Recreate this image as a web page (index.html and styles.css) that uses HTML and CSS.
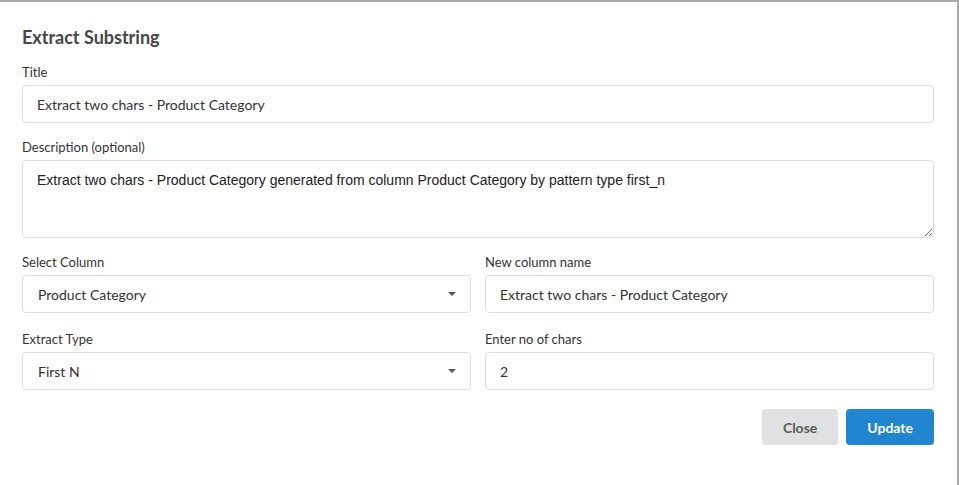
FILE: index.html
```html
<!DOCTYPE html>
<html>
<head>
<meta charset="utf-8">
<link rel="stylesheet" href="styles.css">
</head>
<body>
<div class="modal">
  <h1 class="header">Extract Substring</h1>
  <div class="field">
    <label class="label">Title</label>
    <input class="input" type="text" value="Extract two chars - Product Category">
  </div>
  <div class="field">
    <label class="label">Description (optional)</label>
    <textarea class="textarea">Extract two chars - Product Category generated from column Product Category by pattern type first_n</textarea>
  </div>
  <div class="row row-first">
    <div class="col">
      <label class="label">Select Column</label>
      <div class="select"><span>Product Category</span><i class="caret"></i></div>
    </div>
    <div class="col">
      <label class="label">New column name</label>
      <input class="input" type="text" value="Extract two chars - Product Category">
    </div>
  </div>
  <div class="row">
    <div class="col">
      <label class="label">Extract Type</label>
      <div class="select"><span>First N</span><i class="caret"></i></div>
    </div>
    <div class="col">
      <label class="label">Enter no of chars</label>
      <input class="input" type="text" value="2">
    </div>
  </div>
  <div class="actions">
    <button class="btn btn-close">Close</button>
    <button class="btn btn-update">Update</button>
  </div>
</div>
</body>
</html>
```
FILE: styles.css
```css
html, body {
  margin: 0;
  padding: 0;
  height: 100%;
  background: #a9a9a9;
}
body {
  font-family: Lato, "Noto Sans", sans-serif;
  overflow: hidden;
}
.modal {
  box-sizing: border-box;
  margin-top: 2px;
  width: 957px;
  height: 483px;
  background: #fff;
  padding: 24px 23px 0 22px;
}
.header {
  margin: 0 0 15px 0;
  font-size: 18px;
  line-height: 22px;
  font-weight: 700;
  color: #474747;
}
.field {
  margin-bottom: 15px;
}
.label {
  display: block;
  font-size: 13px;
  line-height: 18px;
  color: #333;
  margin-bottom: 4px;
}
.input {
  box-sizing: border-box;
  display: block;
  width: 100%;
  height: 38px;
  margin: 0;
  padding: 0 14px;
  border: 1px solid #dedede;
  border-radius: 4px;
  font-family: Lato, "Noto Sans", sans-serif;
  font-size: 14px;
  color: #333;
  background: #fff;
  outline: none;
}
.textarea {
  box-sizing: border-box;
  display: block;
  width: 100%;
  height: 78px;
  margin: 0;
  padding: 11px 14px;
  border: 1px solid #dedede;
  border-radius: 4px;
  font-family: "Liberation Sans", Arial, sans-serif;
  font-size: 14px;
  line-height: 17px;
  color: #222;
  resize: vertical;
  outline: none;
}
.row {
  display: flex;
  gap: 14px;
  margin-bottom: 19px;
}
.row-first {
  margin-bottom: 17px;
}
.col {
  flex: 1;
  min-width: 0;
}
.select {
  box-sizing: border-box;
  height: 38px;
  border: 1px solid #dedede;
  border-radius: 4px;
  padding: 0 14px 0 15px;
  display: flex;
  align-items: center;
  justify-content: space-between;
  font-size: 14px;
  color: #333;
}
.caret {
  width: 0;
  height: 0;
  border-left: 4px solid transparent;
  border-right: 4px solid transparent;
  border-top: 4px solid #555;
}
.actions {
  display: flex;
  justify-content: flex-end;
  gap: 8px;
}
.btn {
  height: 36px;
  border: none;
  border-radius: 4px;
  padding: 0 21px;
  font-family: Lato, "Noto Sans", sans-serif;
  font-size: 14px;
  font-weight: 700;
  cursor: pointer;
}
.btn-close {
  background: #e0e1e2;
  color: #5a5a5a;
}
.btn-update {
  background: #2185d0;
  color: #fff;
}
```
